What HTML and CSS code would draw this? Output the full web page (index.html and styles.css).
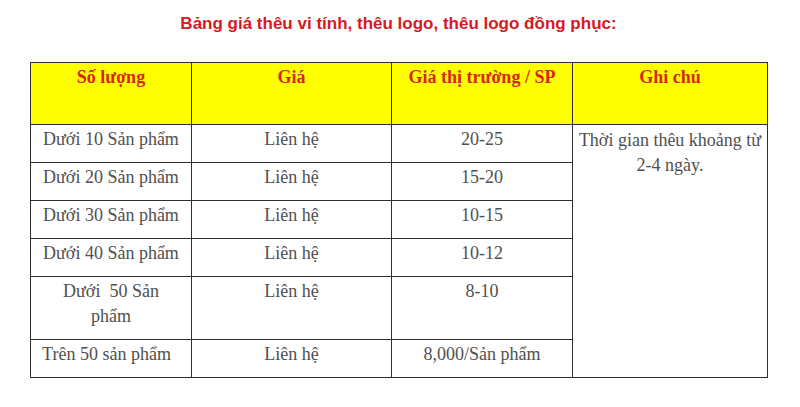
FILE: index.html
```html
<!DOCTYPE html>
<html lang="vi">
<head>
<meta charset="utf-8">
<link rel="stylesheet" href="styles.css">
</head>
<body>
<div class="page">
  <h2 class="title">Bảng giá thêu vi tính, thêu logo, thêu logo đồng phục:</h2>
  <table class="price">
    <colgroup>
      <col class="c1"><col class="c2"><col class="c3"><col class="c4">
    </colgroup>
    <thead>
      <tr>
        <th>Số lượng</th>
        <th>Giá</th>
        <th>Giá thị trường / SP</th>
        <th>Ghi chú</th>
      </tr>
    </thead>
    <tbody>
      <tr>
        <td>Dưới 10 Sản phẩm</td>
        <td>Liên hệ</td>
        <td>20-25</td>
        <td rowspan="6" class="note">Thời gian thêu khoảng từ 2-4 ngày.</td>
      </tr>
      <tr><td>Dưới 20 Sản phẩm</td><td>Liên hệ</td><td>15-20</td></tr>
      <tr><td>Dưới 30 Sản phẩm</td><td>Liên hệ</td><td>10-15</td></tr>
      <tr><td>Dưới 40 Sản phẩm</td><td>Liên hệ</td><td>10-12</td></tr>
      <tr><td>Dưới&nbsp; 50 Sản<br>phẩm</td><td>Liên hệ</td><td>8-10</td></tr>
      <tr><td>Trên 50 sản phẩm&nbsp;&nbsp;</td><td>Liên hệ</td><td>8,000/Sản phẩm</td></tr>
    </tbody>
  </table>
</div>
</body>
</html>
```

FILE: styles.css
```css
html, body {
  margin: 0;
  padding: 0;
  background: #ffffff;
}

.page {
  padding: 14px 0 0 30px;
}

.title {
  margin: 0 0 28px 0;
  width: 737px;
  text-align: center;
  font-family: "Liberation Sans", Arial, sans-serif;
  font-weight: bold;
  font-size: 17px;
  line-height: 20px;
  color: #d71a21;
}

.price {
  border-collapse: collapse;
  table-layout: fixed;
  width: 737px;
  font-family: "Liberation Serif", "Times New Roman", serif;
  font-size: 18px;
  line-height: 25px;
}

.c1 { width: 161px; }
.c2 { width: 200px; }
.c3 { width: 181px; }
.c4 { width: 195px; }

.price th,
.price td {
  border: 1.5px solid #2e2e2e;
  text-align: center;
  vertical-align: top;
  padding: 2px 6px 10px;
  color: #505050;
  font-weight: normal;
  white-space: normal;
}

.price th {
  background: #ffff00;
  color: #d9261c;
  font-weight: bold;
  height: 49px;
  padding-top: 2px;
}

.price tbody td {
  height: 24px;
}

.price td.note {
  padding: 3px 4px 10px;
}
```
